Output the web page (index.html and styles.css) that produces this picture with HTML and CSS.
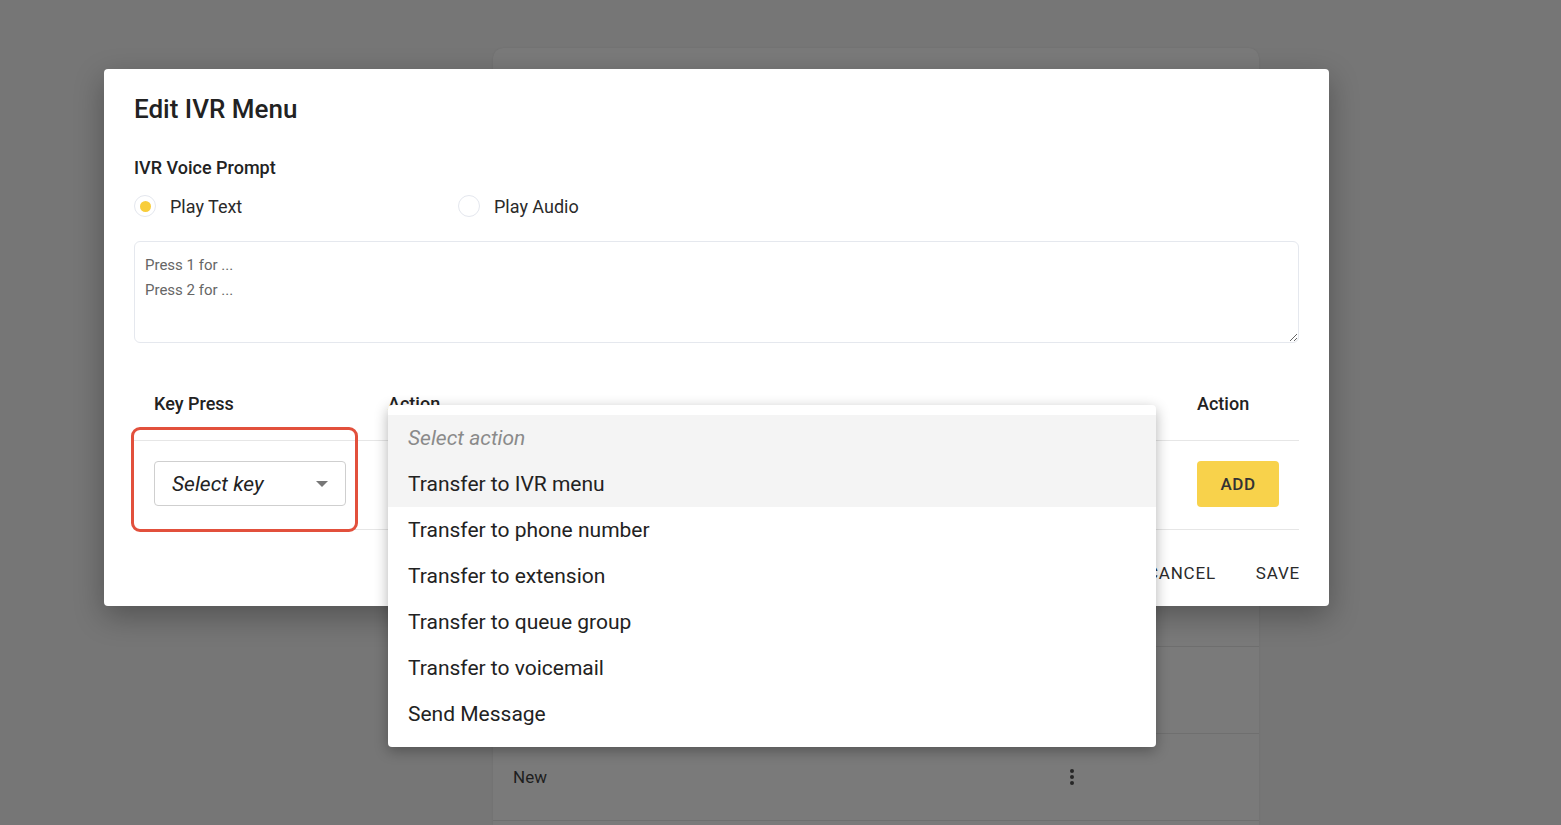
FILE: index.html
```html
<!DOCTYPE html>
<html>
<head>
    <title>Edit IVR Menu</title>
    <link rel="stylesheet" href="styles.css">
</head>
<body>
    <div class="page">
        <div class="menu-card">
            <div class="menu-card-head"></div>
            <div class="menu-row"></div>
            <div class="menu-row"></div>
            <div class="menu-row"></div>
            <div class="menu-row"></div>
            <div class="menu-row"></div>
            <div class="menu-row"></div>
            <div class="menu-row"></div>
            <div class="menu-row">
                <span class="menu-name">New</span>
                <span class="kebab"><i></i><i></i><i></i></span>
            </div>
        </div>
    </div>

    <div class="dialog">
        <h2 class="dialog-title">Edit IVR Menu</h2>

        <div class="field-label">IVR Voice Prompt</div>
        <div class="radio-group">
            <label class="radio-option">
                <span class="radio checked"></span>
                Play Text
            </label>
            <label class="radio-option">
                <span class="radio"></span>
                Play Audio
            </label>
        </div>

        <textarea class="prompt-text">Press 1 for ...
Press 2 for ...</textarea>

        <div class="key-table">
            <div class="key-head">
                <div class="cell">Key Press</div>
                <div class="cell">Action</div>
                <div class="cell">Action</div>
            </div>
            <div class="key-row">
                <div class="cell">
                    <div class="select-box">
                        <span>Select key</span>
                        <span class="caret"></span>
                    </div>
                </div>
                <div class="cell"></div>
                <div class="cell">
                    <button class="add-button">ADD</button>
                </div>
            </div>

            <div class="highlight"></div>

            <ul class="action-menu">
                <li class="placeholder shaded">Select action</li>
                <li class="shaded">Transfer to IVR menu</li>
                <li>Transfer to phone number</li>
                <li>Transfer to extension</li>
                <li>Transfer to queue group</li>
                <li>Transfer to voicemail</li>
                <li>Send Message</li>
            </ul>
        </div>

        <div class="dialog-actions">
            <button class="text-button">CANCEL</button>
            <button class="text-button">SAVE</button>
        </div>
    </div>
</body>
</html>
```

FILE: styles.css
```css
body {
    margin: 0;
    background-color: #767676;
    font-family: Roboto, "Liberation Sans", sans-serif;
    color: #222;
    overflow: hidden;
}

.page {
    display: flex;
    flex-direction: column;
    padding: 48px 0 0 493px;
    height: 825px;
    box-sizing: border-box;
}

/* page content under the overlay */
.menu-card {
    flex: 1;
    width: 766px;
    background-color: #7a7a7a;
    border-radius: 10px 10px 0 0;
    box-shadow: 0 0 2px rgba(0,0,0,0.08);
}

.menu-card-head {
    height: 76px;
    border-bottom: 1px solid #6f6f6f;
}

.menu-row {
    height: 87px;
    box-sizing: border-box;
    border-bottom: 1px solid #6f6f6f;
    display: flex;
    align-items: center;
    padding: 0 20px;
}

.menu-name {
    font-size: 17px;
    color: #1e1e1e;
    width: 40px;
}

.kebab {
    display: flex;
    flex-direction: column;
    gap: 2px;
    margin-left: 517px;
}

.kebab i {
    width: 4px;
    height: 4px;
    border-radius: 50%;
    background-color: #262626;
}

/* dialog */
.dialog {
    position: absolute;
    left: 104px;
    top: 69px;
    width: 1225px;
    height: 537px;
    box-sizing: border-box;
    padding: 24px 30px 0;
    background-color: #fff;
    border-radius: 4px;
    box-shadow: 0 10px 30px rgba(0,0,0,0.3);
}

.dialog-title {
    margin: 0;
    font-size: 26px;
    line-height: 32px;
    font-weight: 500;
    color: #222;
}

.field-label {
    margin-top: 31px;
    font-size: 18px;
    line-height: 24px;
    font-weight: 500;
}

.radio-group {
    display: flex;
    margin-top: 14px;
    height: 24px;
}

.radio-option {
    width: 324px;
    display: flex;
    align-items: center;
    gap: 14px;
    font-size: 18px;
    color: #2a2a2a;
}

.radio {
    width: 22px;
    height: 22px;
    box-sizing: border-box;
    border: 1px solid #e4e7ee;
    border-radius: 50%;
    display: flex;
    align-items: center;
    justify-content: center;
}

.radio.checked::after {
    content: "";
    width: 11px;
    height: 11px;
    border-radius: 50%;
    background-color: #f8cd3a;
}

.prompt-text {
    display: block;
    margin-top: 23px;
    width: 100%;
    height: 102px;
    box-sizing: border-box;
    padding: 11px 10px;
    border: 1px solid #e5e8ee;
    border-radius: 6px;
    font-family: Roboto, "Liberation Sans", sans-serif;
    font-size: 15px;
    line-height: 25px;
    color: #666;
    resize: vertical;
    outline: none;
}

/* key press table */
.key-table {
    position: relative;
    margin-top: 27px;
}

.key-head,
.key-row {
    display: grid;
    grid-template-columns: 234px 1fr 122px;
}

.key-head {
    padding: 22px 0 24px;
    border-bottom: 1px solid #e6e6e6;
    font-size: 18px;
    line-height: 24px;
    font-weight: 500;
}

.key-row {
    padding: 20px 0 22px;
    border-bottom: 1px solid #e6e6e6;
}

.cell {
    padding: 0 20px;
}

.select-box {
    width: 192px;
    height: 45px;
    box-sizing: border-box;
    border: 1px solid #cfcfcf;
    border-radius: 4px;
    display: flex;
    align-items: center;
    justify-content: space-between;
    padding: 0 17px 0 17px;
    font-size: 21px;
    font-style: italic;
    color: #222;
}

.caret {
    width: 0;
    height: 0;
    border-left: 6px solid transparent;
    border-right: 6px solid transparent;
    border-top: 6px solid #777;
}

.add-button {
    width: 82px;
    height: 46px;
    border: none;
    border-radius: 4px;
    background-color: #f8d24b;
    font-family: Roboto, "Liberation Sans", sans-serif;
    font-size: 17px;
    font-weight: 500;
    letter-spacing: 0.5px;
    color: #333;
    cursor: pointer;
}

.highlight {
    position: absolute;
    left: -3px;
    top: 57px;
    width: 227px;
    height: 105px;
    box-sizing: border-box;
    border: 3px solid #e2503c;
    border-radius: 9px;
}

.action-menu {
    position: absolute;
    left: 254px;
    top: 35px;
    width: 768px;
    margin: 0;
    padding: 10px 0;
    list-style: none;
    background-color: #fff;
    border-radius: 4px;
    box-shadow: 0 4px 14px rgba(0,0,0,0.3);
    z-index: 2;
}

.action-menu li {
    height: 46px;
    line-height: 46px;
    padding: 0 20px;
    font-size: 21px;
    color: #222;
}

.action-menu li.shaded {
    background-color: #f4f4f4;
}

.action-menu li.placeholder {
    font-style: italic;
    color: #8a8a8a;
}

.dialog-actions {
    margin-top: 31px;
    display: flex;
    justify-content: flex-end;
    gap: 40px;
    margin-right: -1px;
}

.text-button {
    border: none;
    background: none;
    padding: 0;
    font-family: Roboto, "Liberation Sans", sans-serif;
    font-size: 17px;
    line-height: 24px;
    letter-spacing: 0.8px;
    color: #2a2a2a;
    cursor: pointer;
}
```
